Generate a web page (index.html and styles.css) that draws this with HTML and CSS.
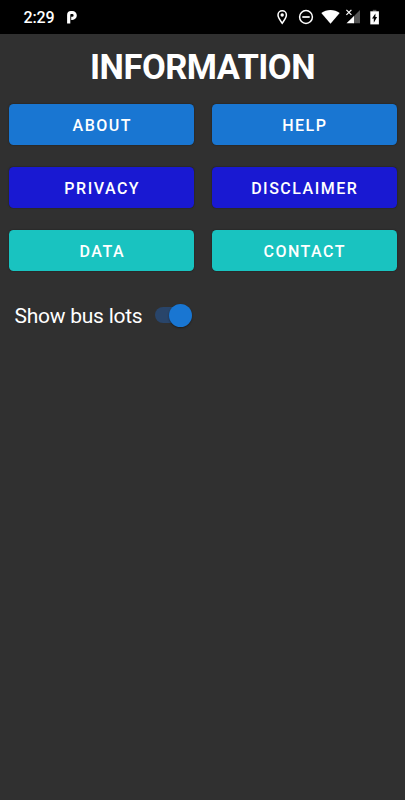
FILE: index.html
```html
<!DOCTYPE html>
<html lang="en">
<head>
<meta charset="utf-8">
<title>Information</title>
<link rel="stylesheet" href="styles.css">
</head>
<body>
<header class="status">
  <span class="time">2:29</span>
  <svg class="parking" width="12" height="14" viewBox="0 0 12 14"><path d="M2.700 13.400V5Q2.700 2.500 5 2.500H6.300A2.900 2.900 0 0 1 6.300 8.300H5.200" fill="none" stroke="#fff" stroke-width="3.200"/></svg>
  <svg class="icons" width="106" height="18" viewBox="0 0 106 18">
    <path fill="none" stroke="#fff" stroke-width="1.500" d="M6.200 15.200C4.500 12.800 2 9.800 2 7a4.200 4.200 0 0 1 8.400 0c0 2.800-2.500 5.800-4.200 8.200Z"/>
    <circle cx="6.200" cy="7" r="1.700" fill="#fff"/>
    <circle cx="30" cy="9" r="6.400" fill="none" stroke="#fff" stroke-width="1.500"/>
    <path fill="none" stroke="#fff" stroke-width="1.700" d="M26.300 9h7.400"/>
    <path fill="#fff" d="M45.300 5C50.500 1.100 58.500 1.100 63.700 5L54.500 15.800Z"/>
    <path fill="#555" d="M84 2v13.200H77.300V8.700Z"/>
    <path fill="#fff" d="M78 8v7.200H70.500Z"/>
    <path stroke="#fff" stroke-width="1.200" d="M70.400 1.900l5 5m0-5l-5 5"/>
    <path fill="#555" d="M96.800 1.800h3.600v2h-3.600z"/>
    <path fill="#fff" d="M94.300 3.300h8.600v13.100h-8.600z"/>
    <path fill="#000" d="M99.400 5.400v3.700h1.700l-3.300 5.600v-4.200h-1.800z"/>
  </svg>
</header>
<main>
  <h1>INFORMATION</h1>
  <div class="grid">
    <button class="blue">ABOUT</button>
    <button class="blue">HELP</button>
    <button class="indigo">PRIVACY</button>
    <button class="indigo">DISCLAIMER</button>
    <button class="teal">DATA</button>
    <button class="teal">CONTACT</button>
  </div>
  <div class="setting">
    <span class="label">Show bus lots</span>
    <span class="switch"><span class="thumb"></span></span>
  </div>
</main>
</body>
</html>
```
FILE: styles.css
```css
* { box-sizing: border-box; }
body {
  margin: 0;
  min-height: 800px;
  background: #303030;
  color: #fff;
  font-family: Roboto, sans-serif;
}
.status {
  display: flex;
  align-items: center;
  height: 34px;
  padding: 0 23px 0 23.500px;
  background: #000;
}
.time {
  width: 31px;
  padding-top: 1px;
  font-size: 16px;
  font-weight: 500;
  line-height: 20px;
  letter-spacing: -0.150px;
}
.parking { margin-left: 11px; }
.icons { margin-left: auto; }
h1 {
  margin: 0;
  padding-top: 13px;
  font-size: 34.500px;
  font-weight: 700;
  line-height: 40px;
  letter-spacing: -0.500px;
  text-align: center;
}
.grid {
  display: grid;
  grid-template-columns: 1fr 1fr;
  gap: 22px 17.500px;
  padding: 17px 8.500px 0 9px;
}
button {
  height: 41px;
  padding: 2px 0 0 1.500px;
  border: 0;
  border-radius: 4.500px;
  color: #fff;
  font: 500 16px/20px Roboto, sans-serif;
  letter-spacing: 1.500px;
  box-shadow: 0 0 1.500px rgba(0, 0, 0, .6);
}
.blue { background: #1976d2; }
.indigo { background: #1919d2; }
.teal { background: #19c3c0; }
.setting {
  display: flex;
  align-items: center;
  padding: 28.500px 0 0 14.500px;
}
.label {
  width: 140px;
  padding-top: 2px;
  font-size: 21px;
  line-height: 29px;
  letter-spacing: -0.250px;
  white-space: nowrap;
}
.switch {
  display: flex;
  align-items: center;
  justify-content: flex-end;
  width: 34px;
  height: 16px;
  border-radius: 8px;
  background: #29456a;
}
.thumb {
  flex: none;
  width: 23px;
  height: 23px;
  margin-right: -3px;
  border-radius: 50%;
  background: #1976d2;
  box-shadow: 0 1px 2px rgba(0, 0, 0, .4);
}
```
